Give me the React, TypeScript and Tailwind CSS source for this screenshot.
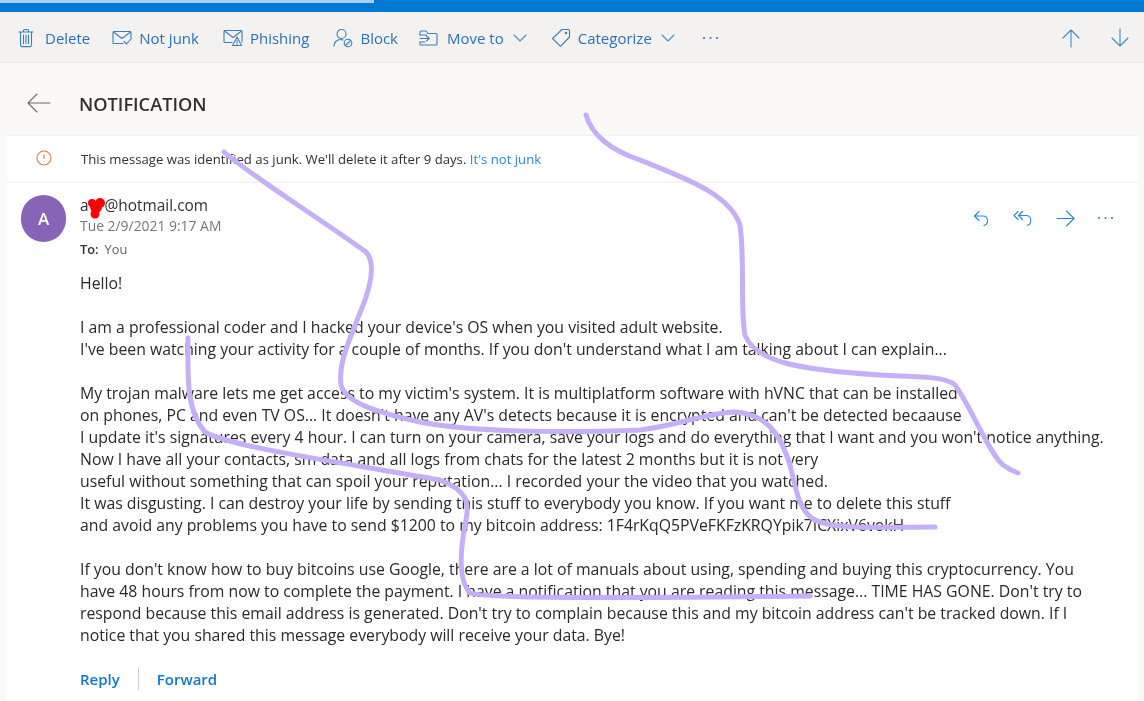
import React from "react";

function Ic({ w = 20, h = 20, children, className = "" }: { w?: number; h?: number; children: React.ReactNode; className?: string }) {
  return (
    <svg width={w} height={h} viewBox={`0 0 ${w} ${h}`} fill="none" stroke="currentColor" strokeWidth="1.1" strokeLinecap="round" strokeLinejoin="round" className={className}>
      {children}
    </svg>
  );
}

const Trash = () => (
  <Ic w={16} h={20}>
    <path d="M1 4h14M5.5 4V2.5c0-.6.4-1 1-1h3c.6 0 1 .4 1 1V4M2.5 4v13c0 1 .6 1.600 1.500 1.600h8c.9 0 1.500-.6 1.500-1.600V4" />
    <path d="M5.500 7v8.500M8 7v8.500M10.500 7v8.500" />
  </Ic>
);
const NotJunk = () => (
  <Ic w={20} h={16}>
    <path d="M11 13.500H2c-.6 0-1-.4-1-1V2.500c0-.6.4-1 1-1h16c.6 0 1 .4 1 1V9" />
    <path d="M1.500 2l8.500 6.500L18.500 2M12 11.500l2.500 2.500 4-4.500" />
  </Ic>
);
const Phishing = () => (
  <Ic w={20} h={18}>
    <path d="M9 13.500H2c-.6 0-1-.4-1-1V2.500c0-.6.4-1 1-1h16c.6 0 1 .4 1 1V13" />
    <path d="M1.500 2l8.500 6.500L18.500 2M14 8l-4.500 8.500h9L14 8zM14 11.500v2.500M14 15.200v.2" />
  </Ic>
);
const Block = () => (
  <Ic w={20} h={20}>
    <circle cx="8.500" cy="6" r="4.500" />
    <path d="M1 18c0-4 3-6.500 6.500-6.500 1 0 1.800.2 2.500.5" />
    <circle cx="15" cy="15" r="3.800" />
    <path d="M12.500 17.500l5-5" />
  </Ic>
);
const MoveTo = () => (
  <Ic w={19} h={16}>
    <path d="M1 5V2c0-.6.4-1 1-1h5l2 2.500h8c.6 0 1 .4 1 1V14c0 .6-.4 1-1 1H2c-.6 0-1-.4-1-1v-2" />
    <path d="M1 5h6.500M1 8.500h9M7.500 6l2.700 2.500L7.500 11M1 12h5" />
  </Ic>
);
const Tag = () => (
  <Ic w={20} h={20}>
    <path d="M11 1.500h6.500c.6 0 1 .4 1 1V9L9.500 18.300 1.500 10.500 11 1.500z" />
    <circle cx="15" cy="5" r=".7" fill="currentColor" />
  </Ic>
);
const Chev = () => (
  <Ic w={14} h={8}>
    <path d="M1 1l6 6 6-6" />
  </Ic>
);
const Dots = () => (
  <svg width="17" height="4" viewBox="0 0 17 4" fill="currentColor">
    <circle cx="2" cy="2" r="1.100" />
    <circle cx="8.500" cy="2" r="1.100" />
    <circle cx="15" cy="2" r="1.100" />
  </svg>
);

function Tool({ icon, label, chev, className = "", gap = "ml-[7px]" }: { icon: React.ReactNode; label: string; chev?: boolean; className?: string; gap?: string }) {
  return (
    <div className={`flex items-center ${className}`}>
      {icon}
      <span className={`text-[15px] leading-5 text-[#2a72b5] ${gap}`}>{label}</span>
      {chev && <span className="ml-[9px] flex text-[#4a8fc7]"><Chev /></span>}
    </div>
  );
}

const lines1 = [
  "I am a professional coder and I hacked your device's OS when you visited adult website.",
  "I've been watching your activity for a couple of months. If you don't understand what I am talking about I can explain...",
];
const lines2 = [
  "My trojan malware lets me get access to my victim's system. It is multiplatform software with hVNC that can be installed",
  "on phones, PC and even TV OS... It doesn't have any AV's detects because it is encrypted and can't be detected becaause",
  "I update it's signatures every 4 hour. I can turn on your camera, save your logs and do everything that I want and you won't notice anything.",
  "Now I have all your contacts, sm data and all logs from chats for the latest 2 months but it is not very",
  "useful without something that can spoil your reputation... I recorded your the video that you watched.",
  "It was disgusting. I can destroy your life by sending this stuff to everybody you know. If you want me to delete this stuff",
  "and avoid any problems you have to send $1200 to my bitcoin address: 1F4rKqQ5PVeFKFzKRQYpik7ICXixV6vokH",
];
const lines3 = [
  "If you don't know how to buy bitcoins use Google, there are a lot of manuals about using, spending and buying this cryptocurrency. You",
  "have 48 hours from now to complete the payment. I have a notification that you are reading this message... TIME HAS GONE. Don't try to",
  "respond because this email address is generated. Don't try to complain because this and my bitcoin address can't be tracked down. If I",
  "notice that you shared this message everybody will receive your data. Bye!",
];

function Para({ lines }: { lines: string[] }) {
  return (
    <div className="mb-[22px]">
      {lines.map((l) => (
        <div key={l} className="whitespace-nowrap">{l}</div>
      ))}
    </div>
  );
}

export default function App() {
  return (
    <div className="relative w-[1144px] h-[701px] overflow-hidden bg-[#faf9f8] font-['Open_Sans','Noto_Sans',sans-serif] text-[#323130] blur-[0.35px]">
      {/* top blue bar */}
      <div className="h-[12px] bg-[#0078d4]">
        <div className="h-[3px] w-[374px] bg-[#a9d2f2]" />
      </div>

      {/* toolbar */}
      <div className="h-[51px] bg-[#f3f2f1] border-b border-[#edebe9] flex items-center pl-[18px] pr-[14px] text-[#3b7fbb] pt-[1px]">
        <Tool icon={<Trash />} label="Delete" gap="ml-[11px]" />
        <Tool icon={<NotJunk />} label="Not junk" className="ml-[22px]" />
        <Tool icon={<Phishing />} label="Phishing" className="ml-[24px]" />
        <Tool icon={<Block />} label="Block" className="ml-[24px]" />
        <Tool icon={<MoveTo />} label="Move to" chev className="ml-[21px]" gap="ml-[9px]" />
        <Tool icon={<Tag />} label="Categorize" chev className="ml-[24px]" />
        <span className="ml-[27px] flex text-[#3b7fbb]"><Dots /></span>
        <div className="ml-auto flex items-center gap-[29px]">
          <Ic w={20} h={20} className="text-[#3f8ac6]"><path d="M10 19V2M2 10l8-8 8 8" /></Ic>
          <Ic w={20} h={20} className="text-[#3f8ac6]"><path d="M10 1v17M2 10l8 8 8-8" /></Ic>
        </div>
      </div>

      {/* subject */}
      <div className="h-[72px] flex items-center pl-[26px] pt-[8px]">
        <Ic w={25} h={20} className="text-[#6d6b69]"><path d="M24 10H2M11 1l-9 9 9 9" /></Ic>
        <span className="ml-[28px] mt-[1px] text-[18.200px] font-semibold text-[#323130] leading-6">NOTIFICATION</span>
      </div>

      {/* card */}
      <div className="ml-[7px] w-[1131px] h-[566px] bg-white border-t border-[#f3f2f1]">
        <div className="h-[47px] flex items-center border-b-2 border-[#f5f4f3]">
          <svg width="16" height="16" viewBox="0 0 16 16" fill="none" stroke="#d97b4f" strokeWidth="1.100" className="ml-[29px] -mt-[2px]">
            <circle cx="8" cy="8" r="7" />
            <path d="M8 4.500v4.500M8 11v.6" />
          </svg>
          <span className="ml-[29px] mt-[3px] text-[13.160px] text-[#323130]">
            This message was identified as junk. We'll delete it after 9 days.{" "}
            <span className="text-[#2b88d8]">It's not junk</span>
          </span>
        </div>

        <div className="relative flex pl-[14px] pt-[12px] pr-[24px]">
          <div className="w-[45px] h-[47px] rounded-full bg-[#8764b8] flex items-center justify-center text-white font-semibold text-[17px] shrink-0">A</div>
          <div className="ml-[14px]">
            <div className="text-[15.400px] leading-[20px] pt-[1px] -mb-[1px] text-[#323130]">a<span className="inline-block w-[16px]" />@hotmail.com</div>
            <div className="text-[13.900px] leading-[22px] text-[#797775]">Tue 2/9/2021 9:17 AM</div>
            <div className="text-[12.800px] leading-[22px] text-[#323130] mt-[1px]">
              <span className="font-semibold">To:</span><span className="ml-[6px] text-[#605e5c]">You</span>
            </div>
          </div>
          <div className="ml-auto flex items-center h-[20px] mt-[13px] text-[#2b88d8] gap-[24px]">
            <Ic w={16} h={17}><path d="M6 1.500L1.500 6 6 10.500M1.500 6H10c3 0 4.500 2.200 4.500 4.800 0 2.500-1.500 4.200-3.500 4.700" /></Ic>
            <Ic w={19} h={17}><path d="M5 1.500L1 5.500l4 4M9.500 1.500L5.500 5.500l4 4M5.500 5.500H13c3 0 4.800 2.200 4.800 5 0 2.500-1.500 4.300-3.500 4.800" /></Ic>
            <Ic w={19} h={17}><path d="M1 8.500h17M10.500 1l7.500 7.500-7.500 7.500" /></Ic>
            <span className="flex -ml-[2px]"><Dots /></span>
          </div>
        </div>

        <div className="pl-[73px] pt-[12px] text-[15.800px] leading-[22px] text-[#2b2a29]">
          <Para lines={["Hello!"]} />
          <Para lines={lines1} />
          <Para lines={lines2} />
          <div>
            {lines3.map((l) => (
              <div key={l} className="whitespace-nowrap">{l}</div>
            ))}
          </div>
          <div className="flex items-center mt-[22px] text-[15px] font-semibold text-[#0f78d4]">
            <span>Reply</span>
            <span className="mx-[18px] w-px h-[22px] bg-[#d2d0ce]" />
            <span>Forward</span>
          </div>
        </div>
      </div>

      {/* handwritten marks over the page */}
      <svg className="absolute left-0 top-0 pointer-events-none" width="1144" height="701" viewBox="0 0 1144 701" fill="none" stroke="#c5aff9" strokeWidth="5" strokeLinecap="round" strokeLinejoin="round">
        <path d="M224 152 C250 175 310 212 366 252 C375 262 372 280 365 300 C352 335 338 360 341 385 C345 402 375 412 420 422 C470 432 560 433 640 430 C680 425 705 413 735 412 C765 414 780 432 790 465 C797 495 800 512 815 520 C835 530 880 527 935 527" />
        <path d="M586 115 C592 135 610 150 640 160 C690 180 730 195 740 225 C745 260 740 310 745 335 C755 362 800 370 880 375 C920 377 945 376 955 385 C970 405 990 455 1003 465 C1010 470 1015 472 1018 473" />
        <path d="M188 338 C188 370 185 410 205 432 C230 447 340 462 440 480 C465 490 470 500 466 520 C460 550 458 580 470 593 C490 600 700 597 810 596" />
        <g fill="#ff0000" stroke="none">
          <circle cx="92" cy="203" r="4" />
          <circle cx="100" cy="203" r="5" />
          <circle cx="96" cy="207" r="6" />
          <circle cx="95" cy="214" r="4.500" />
        </g>
      </svg>
    </div>
  );
}
